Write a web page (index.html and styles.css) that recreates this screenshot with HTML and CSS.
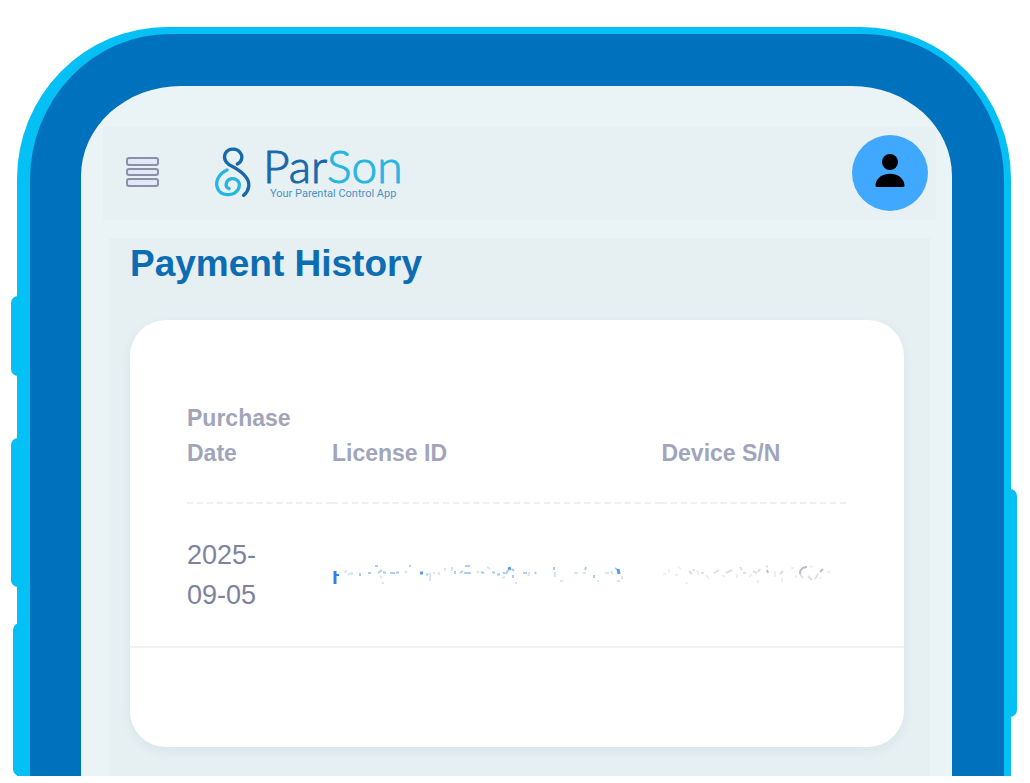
FILE: index.html
```html
<!DOCTYPE html>
<html lang="en">

<head>
    <meta charset="UTF-8">
    <meta name="viewport" content="width=device-width, initial-scale=1.0">
    <title>ParSon - Payment History</title>
    <link rel="stylesheet" href="styles.css">
</head>

<body>
    <div class="phone">
        <span class="side-key key-mute"></span>
        <span class="side-key key-up"></span>
        <span class="side-key key-down"></span>
        <span class="side-key key-power"></span>
        <div class="frame">
            <div class="screen">
                <header class="topbar">
                    <button type="button" class="menu-btn" aria-label="Menu">
                        <svg width="34" height="32" viewBox="0 0 34 32" fill="#e0e9f5" stroke="#8b8fa9" stroke-width="2">
                            <rect x="1" y="1" width="31" height="7" rx="2" />
                            <rect x="1" y="12" width="31" height="6" rx="2" />
                            <rect x="1" y="22" width="31" height="7" rx="2" />
                        </svg>
                    </button>
                    <a href="#" class="logo">
                        <svg width="36" height="51" viewBox="344 82 108 153" fill="none" stroke-width="10" stroke-linecap="round">
                            <path stroke="#27b6e2" d="M380 151C356 162 344 184 351 204C359 229 399 232 413 210C424 190 410 175 394 177C376 180 372 202 386 207" />
                            <path stroke="#1769aa" d="M411 133C424 127 428 111 421 101C411 84 385 84 375 101C368 118 377 131 395 140C425 156 449 175 445 201C443 214 437 221 430 227" />
                        </svg>
                        <span class="logo-text">
                            <span class="logo-name">Par<span>Son</span></span>
                            <span class="logo-tag">Your Parental Control App</span>
                        </span>
                    </a>
                    <button type="button" class="avatar" aria-label="Account">
                        <svg width="30" height="34" viewBox="0 0 30 34">
                            <circle cx="15" cy="9" r="8" />
                            <path d="M2 34Q0 34 0.500 32C2 17 28 17 29.500 32Q30 34 28 34Z" />
                        </svg>
                    </button>
                </header>

                <main class="content">
                    <h1>Payment History</h1>
                    <section class="card">
                        <div class="table-wrap">
                            <table>
                                <thead>
                                    <tr>
                                        <th class="col-date">Purchase Date</th>
                                        <th class="col-license">License ID</th>
                                        <th>Device S/N</th>
                                    </tr>
                                </thead>
                                <tbody>
                                    <tr>
                                        <td>2025-<br>09-05</td>
                                        <td>
                                            <!-- erased license id -->
                                            <svg class="erased" width="295" height="24" viewBox="0 0 295 24" fill="none" stroke="#2f80e8">
                                                <path stroke-width="3" d="M3 8V21" />
                                                <path stroke-width="2" d="M3 12H7" />
                                                <path stroke-width="3" opacity="0.8" d="M88 10h3M176 6l3 -1M286 6l1 5" />
                                                <path stroke-width="2" opacity="0.4" d="M94 11l2 1M28 10v3M36 10h3M43 3h3M46 10l4 -3M51 9l3 1M58 10h5M64 10l3 -1M77 3h2M123 8v3M128 10l3 -2M133 3h5M132 10h7M149 9l3 1M160 9l3 1M165 12l3 -1M171 9l2 2M174 11l2 -4M180 6l2 2M181 12v3M191 10h4M222 4v3M254 4l-1 3M262 12v3M203 9l1 2M283 5l3 2" />
                                                <path stroke-width="2" opacity="0.2" d="M12 9l3 -1M16 12l3 -2M20 9v3M48 13l2 2M50 20h2M73 10l2 -2M98 10v8M101 10h2M107 9v3M113 5v3M120 4v4M145 8l2 2M155 4l3 2M170 15l3 -1M183 20h2M197 9v4M223 9v5M228 18h3M242 10h4M251 10h3M265 18h2M273 10h4M279 8l2 3M285 18h3M290 13v3" />
                                            </svg>
                                        </td>
                                        <td>
                                            <!-- erased serial number -->
                                            <svg class="erased" width="170" height="24" viewBox="0 0 170 24" fill="none" stroke="#777d9d">
                                                <path stroke-width="2" opacity="0.5" d="M106 7l1 3M139 11C139 6 141 4 146 4M159 9l3 -3" />
                                                <path stroke-width="2" opacity="0.25" d="M28 8l3 3M32 8l1 -2M40 10h3M53 10l5 -3M65 10l6 -3M79 4l2 3M82 10h3M92 8l4 2M97 9l2 -3M105 3l2 1M119 11l3 -3M139 11l3 4M147 13l4 4M154 16l3 -5" />
                                                <path stroke-width="2" opacity="0.12" d="M2 12l3 -2M8 6v4M14 12h3M17 4l3 2M24 20h3M36 7l2 5M45 12l3 4M61 12l3 2M76 11v4M88 14l3 -3M97 17v3M114 8v6M121 15v4M130 5h3M135 12v3M149 3l3 1M158 15h2M166 9h3" />
                                            </svg>
                                        </td>
                                    </tr>
                                </tbody>
                            </table>
                        </div>
                    </section>
                </main>
            </div>
        </div>
    </div>
</body>

</html>
```
FILE: styles.css
```css
* {
    box-sizing: border-box;
}

body {
    margin: 0;
    padding: 27px 19px 7px 17px;
    min-height: 100vh;
    display: flex;
    background-color: #fff;
    font-family: "Liberation Sans", Arial, sans-serif;
}

button {
    padding: 0;
    border: none;
    background: none;
    cursor: pointer;
}

svg {
    display: block;
}

/* phone body */
.phone {
    position: relative;
    flex: 1;
    display: flex;
    padding: 7px 7px 0 13px;
    background-color: #04c0f5;
    border-radius: 150px 150px 0 0 / 152px 152px 0 0;
}

.side-key {
    position: absolute;
    left: -6px;
    width: 16px;
    background-color: #04c0f5;
    border-radius: 7px;
}

.key-mute {
    top: 269px;
    height: 80px;
}

.key-up {
    top: 411px;
    height: 149px;
}

.key-down {
    left: -4px;
    top: 596px;
    height: 153px;
}

.key-power {
    left: auto;
    right: -6px;
    top: 462px;
    height: 228px;
}

.frame {
    position: relative;
    flex: 1;
    display: flex;
    padding: 52px 52px 0 51px;
    background-color: #0071bd;
    border-radius: 140px 140px 0 0 / 146px 146px 0 0;
}

.screen {
    flex: 1;
    display: flex;
    flex-direction: column;
    padding-top: 41px;
    background-color: #eaf3f6;
    border-radius: 100px 100px 0 0 / 90px 90px 0 0;
    overflow: hidden;
}

/* header */
.topbar {
    display: flex;
    align-items: center;
    height: 93px;
    margin: 0 16px 0 22px;
    padding: 0 8px 2px 23px;
    background-color: #e7f0f3;
}

.logo {
    display: flex;
    align-items: center;
    gap: 12px;
    margin-left: 55px;
    text-decoration: none;
}

.logo-text {
    display: flex;
    flex-direction: column;
}

.logo-name {
    font-family: Lato, sans-serif;
    font-size: 46px;
    font-weight: 300;
    line-height: 42px;
    color: #1769aa;
    -webkit-text-stroke: 1px;
}

.logo-name span {
    color: #27b6e2;
}

.logo-tag {
    padding-left: 7px;
    font-family: Roboto, sans-serif;
    font-size: 11px;
    line-height: 14px;
    color: #4c92c3;
}

.avatar {
    display: flex;
    align-items: center;
    justify-content: center;
    width: 76px;
    height: 76px;
    margin-left: auto;
    padding-bottom: 5px;
    border-radius: 50%;
    background-color: #40a9ff;
}

/* payments */
.content {
    flex: 1;
    margin: 18px 22px 0 28px;
    padding: 0 26px 28px 21px;
    background-color: #e6eff2;
}

h1 {
    margin: 0 0 30px;
    font-size: 37px;
    line-height: 52px;
    color: #0c6db2;
}

.card {
    padding: 81px 0 99px;
    background-color: #fff;
    border-radius: 36px;
    box-shadow: 0 4px 12px rgba(40, 80, 100, 0.06);
}

.table-wrap {
    padding: 0 58px 0 57px;
    border-bottom: 2px solid #f0f1f2;
}

table {
    width: 100%;
    table-layout: fixed;
    border-collapse: collapse;
    text-align: left;
}

th {
    padding: 0 30px 31px 0;
    vertical-align: bottom;
    font-size: 23px;
    line-height: 35px;
    color: #a1a5bb;
    border-bottom: 2px dashed #eeeff1;
}

td {
    padding: 31px 0;
    font-size: 27px;
    line-height: 40px;
    color: #7e839f;
}

.col-date {
    width: 22%;
}

.col-license {
    width: 50%;
}

.erased {
    max-width: 100%;
}
```
